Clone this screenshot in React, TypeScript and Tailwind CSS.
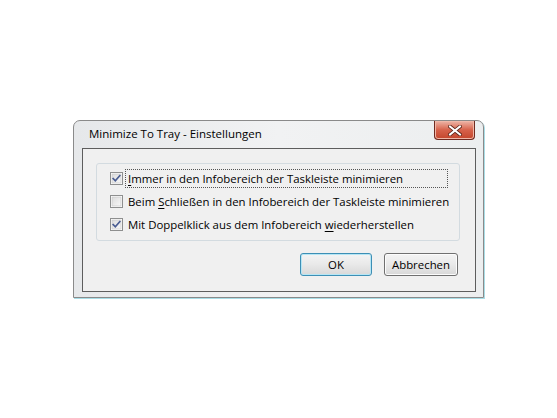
import React from "react";

function Check({ checked }: { checked: boolean }) {
  return (
    <svg width="13" height="13" viewBox="0 0 13 13" className="shrink-0">
      <defs>
        <linearGradient id="cbg" x1="0" y1="0" x2="1" y2="1">
          <stop offset="0" stopColor="#dcdcdc" />
          <stop offset="1" stopColor="#f8f8f8" />
        </linearGradient>
      </defs>
      <rect x="0.5" y="0.5" width="12" height="12" fill="#ffffff" stroke="#8e8f8f" />
      <rect x="2" y="2" width="9" height="9" fill="url(#cbg)" stroke="#c4c4c4" strokeWidth="0.6" />
      {checked && (
        <path d="M3.2 6.6 L5.3 8.8 L9.8 3.6" fill="none" stroke="#4a5d92" strokeWidth="1.7" strokeLinecap="square" />
      )}
    </svg>
  );
}

export default function App() {
  const font = { fontFamily: '"Open Sans", "Noto Sans", sans-serif' };
  return (
    <div className="w-[557px] h-[418px] bg-white relative overflow-hidden" style={font}>
      <div className="pt-[120px] pl-[73px]">
        <div className="relative w-[411px] h-[178px] rounded-t-[7px] border border-[#8a8a8a] bg-gradient-to-r from-[#e6e8ea] via-[#f1f2f3] to-[#eceeef] shadow-[1px_1px_0_#a9dde6]">
          <div className="h-[27px] flex items-start justify-between">
            <div className="pl-[15px] pt-[5px] text-[11.5px] text-black leading-[16px]">
              Minimize To Tray - Einstellungen
            </div>
            <div className="mr-[8px] w-[41px] h-[19px] rounded-b-[4px] border border-[#6f2a20] border-t-0 bg-gradient-to-b from-[#ecb5a8] via-[#d6614a] to-[#c4452b] shadow-[inset_0_0_0_1px_#f0b8a8] flex items-center justify-center">
              <svg width="14" height="11" viewBox="0 0 14 11">
                <path d="M2 1.5 L12 9.5 M12 1.5 L2 9.5" stroke="#5b2418" strokeWidth="3.6" strokeLinecap="square" />
                <path d="M2 1.5 L12 9.5 M12 1.5 L2 9.5" stroke="#ffffff" strokeWidth="2" strokeLinecap="square" />
              </svg>
            </div>
          </div>
          <div className="ml-[8px] w-[394px] h-[144px] border border-[#5d5d5d] bg-[#f0f0f0] text-[11.4px] text-black">
            <div className="ml-[13px] mt-[14px] w-[364px] h-[78px] rounded-[3px] border border-[#d3dbe0] pl-[13px] pt-[8px] flex flex-col gap-[10px]">
              <div className="flex items-center gap-[5px] h-[13px]">
                <Check checked />
                <span className="border border-dotted border-[#555] px-[2px] w-[323px] leading-[17px] -ml-[3px]">
                  <span className="underline underline-offset-2">I</span>mmer in den Infobereich der Taskleiste minimieren
                </span>
              </div>
              <div className="flex items-center gap-[5px] h-[13px]">
                <Check checked={false} />
                <span className="leading-[17px]">
                  Beim <span className="underline underline-offset-2">S</span>chließen in den Infobereich der Taskleiste minimieren
                </span>
              </div>
              <div className="flex items-center gap-[5px] h-[13px]">
                <Check checked />
                <span className="leading-[17px]">
                  Mit Doppelklick aus dem Infobereich <span className="underline underline-offset-2">w</span>iederherstellen
                </span>
              </div>
            </div>
            <div className="flex justify-end gap-[12px] mt-[12px] mr-[17px]">
              <div className="w-[72px] h-[23px] rounded-[3px] border border-[#3d8fb5] bg-gradient-to-b from-[#f4f4f4] via-[#e9e9e9] to-[#d8d8d8] shadow-[inset_0_0_0_1px_#b6e6f5] flex items-center justify-center">
                OK
              </div>
              <div className="w-[74px] h-[23px] rounded-[3px] border border-[#707070] bg-gradient-to-b from-[#f4f4f4] via-[#e9e9e9] to-[#d8d8d8] shadow-[inset_0_0_0_1px_#fcfcfc] flex items-center justify-center">
                Abbrechen
              </div>
            </div>
          </div>
        </div>
      </div>
    </div>
  );
}
